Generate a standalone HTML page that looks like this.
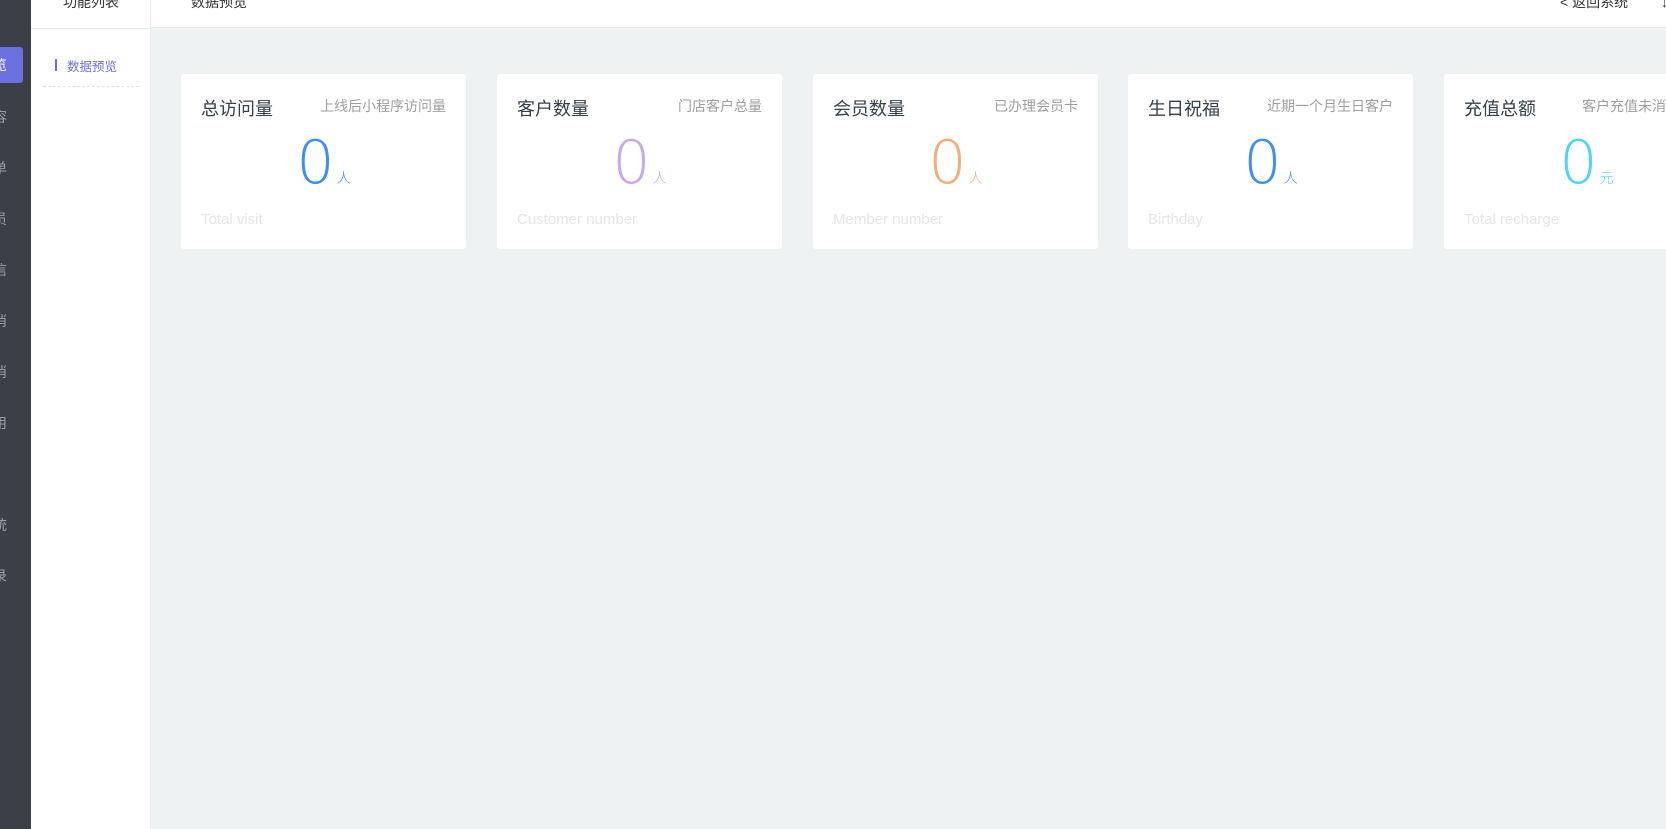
<!DOCTYPE html>
<html><head><meta charset="utf-8"><style>
*{margin:0;padding:0;box-sizing:border-box}
body{width:1666px;height:829px;overflow:hidden;background:#eff2f3;font-family:"Liberation Sans","Noto Sans CJK SC",sans-serif;position:relative}
.side{position:absolute;left:0;top:0;width:31px;height:829px;background:#3c3f47;overflow:hidden}
.side .c{position:absolute;left:-7px;font-size:14px;color:#9a9ea6;line-height:20px}
.side .act{position:absolute;left:0;top:47px;width:23px;height:36px;background:#6b70e0;border-radius:0 3px 3px 0}
.panel{position:absolute;left:31px;top:0;width:120px;height:829px;background:#fff;border-right:1px solid #ececec}
.hdr{position:absolute;left:151px;top:0;width:1515px;height:28px;background:#fff;border-bottom:1px solid #ececec}
.t{position:absolute;font-size:14px;color:#333;line-height:14px;top:-5px}
.card{position:absolute;top:74px;width:285px;height:175px;background:#fff;border-radius:3px}
.card .h{position:absolute;left:20px;top:21px;font-size:18px;color:#35414a}
.card .s{position:absolute;right:20px;top:22px;font-size:14px;color:#9e9e9e}
.card .n{position:absolute;left:0;width:100%;top:59px;text-align:center;font-size:60px;line-height:60px;font-family:"DejaVu Sans","Liberation Sans",sans-serif;font-weight:300}
.card .n span{font-size:14px;margin-left:2px;font-family:"Liberation Sans","Noto Sans CJK SC",sans-serif}
.card .e{position:absolute;left:20px;top:137px;font-size:15px;color:#e6e6e6}
</style></head><body>
<div class="side">
<div class="act"></div>
<div class="c" style="top:55px;color:#fff">览</div>
<div class="c" style="top:107px">容</div>
<div class="c" style="top:158px">单</div>
<div class="c" style="top:209px">员</div>
<div class="c" style="top:260px">信</div>
<div class="c" style="top:311px">消</div>
<div class="c" style="top:362px">消</div>
<div class="c" style="top:413px">用</div>
<div class="c" style="top:464px">v</div>
<div class="c" style="top:515px">统</div>
<div class="c" style="top:566px">录</div>
</div>
<div class="panel">
<div class="t" style="left:32px">功能列表</div>
<div style="position:absolute;left:0;top:28px;width:119px;border-top:1px solid #ececec"></div>
<div style="position:absolute;left:24px;top:59px;width:2px;height:12px;background:#6b70e0"></div>
<div style="position:absolute;left:36px;top:56px;font-size:12.5px;color:#6b70e0">数据预览</div>
<div style="position:absolute;left:12px;top:86px;width:96px;border-top:1px dashed #e3e3e3"></div>
</div>
<div class="hdr">
<div class="t" style="left:40px">数据预览</div>
<div class="t" style="left:1409px">&lt; 返回系统</div>
<div class="t" style="left:1510px">↓</div>
</div>
<div class="card" style="left:181px"><div class="h">总访问量</div><div class="s">上线后小程序访问量</div><div class="n" style="color:#3d8ef5">0<span>人</span></div><div class="e">Total visit</div></div>
<div class="card" style="left:497px"><div class="h">客户数量</div><div class="s">门店客户总量</div><div class="n" style="color:#c9a7f3">0<span>人</span></div><div class="e">Customer number</div></div>
<div class="card" style="left:813px"><div class="h">会员数量</div><div class="s">已办理会员卡</div><div class="n" style="color:#f5ad7c">0<span>人</span></div><div class="e">Member number</div></div>
<div class="card" style="left:1128px"><div class="h">生日祝福</div><div class="s">近期一个月生日客户</div><div class="n" style="color:#3d8ef5">0<span>人</span></div><div class="e">Birthday</div></div>
<div class="card" style="left:1444px;width:240px"><div class="h">充值总额</div><div class="s" style="right:auto;left:138px;white-space:nowrap">客户充值未消费</div><div class="n" style="color:#4dd6f8;width:285px">0<span>元</span></div><div class="e">Total recharge</div></div>
</body></html>
